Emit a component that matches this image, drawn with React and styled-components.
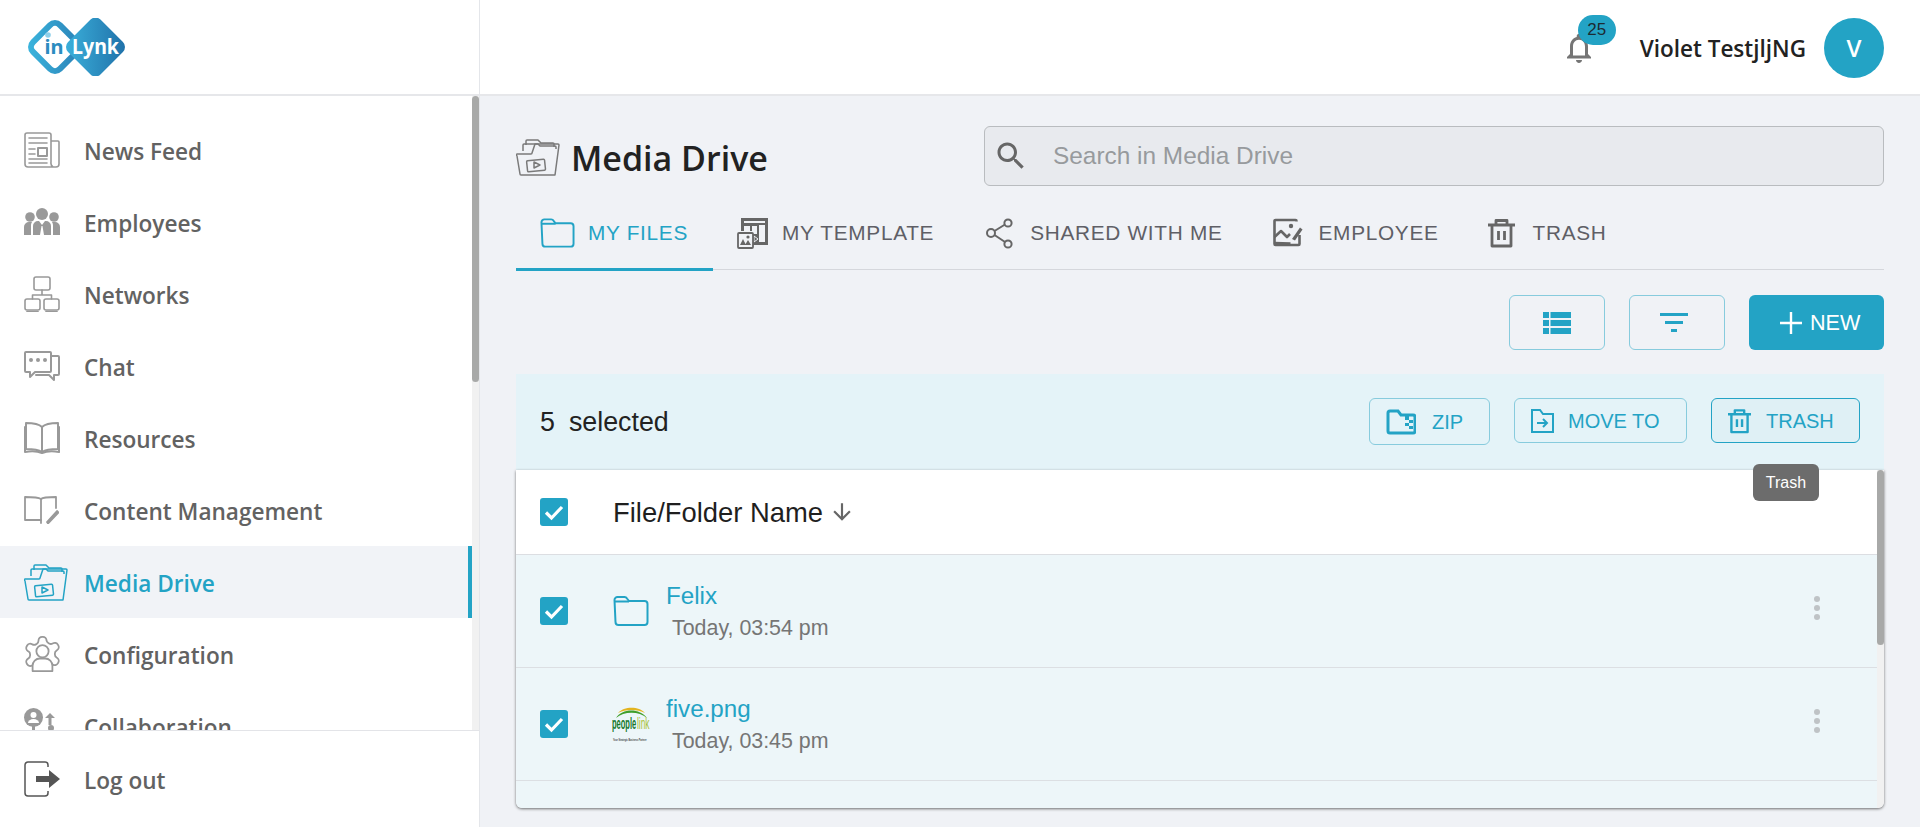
import React from 'react';
import styled, { createGlobalStyle } from 'styled-components';

const accent = '#23a3c5';
const arial = '"Liberation Sans", Arial, sans-serif';
const humanist = '"Open Sans", "Noto Sans", sans-serif';

const GlobalStyle = createGlobalStyle`
  html, body { margin: 0; padding: 0; height: 827px; overflow: hidden; background: #f0f2f6; }
  * { box-sizing: border-box; }
`;

const Page = styled.div`
  display: grid;
  grid-template-columns: 480px 1fr;
  width: 1920px;
  height: 827px;
`;

const Sidebar = styled.aside`
  display: flex;
  flex-direction: column;
  height: 827px;
  background: #fff;
  border-right: 1px solid #e4e6ea;
`;

const LogoBar = styled.div`
  height: 96px;
  flex: none;
  padding: 18px 0 0 24px;
  border-bottom: 2px solid #e6e7ea;
`;

const NavArea = styled.div`
  flex: 1;
  min-height: 0;
  display: flex;
`;

const NavList = styled.nav`
  flex: 1;
  min-width: 0;
  overflow: hidden;
  padding-top: 18px;
`;

const ScrollTrack = styled.div`
  width: 7px;
  flex: none;
  background: #f1f1f1;
`;

const ScrollThumb = styled.div`
  height: ${p => p.$h}px;
  background: #a8a9a8;
  border-radius: 4px;
`;

const NavItem = styled.div`
  display: flex;
  align-items: center;
  height: 72px;
  padding-left: 24px;
  font: 600 22.6px ${humanist};
  color: ${p => (p.$active ? accent : '#626262')};
  background: ${p => (p.$active ? '#f1f3f7' : 'transparent')};
  border-right: 4px solid ${p => (p.$active ? accent : 'transparent')};
`;

const NavGlyph = styled.span`
  display: flex;
  align-items: center;
  width: 61px;
  flex: none;
  color: ${p => (p.$active ? accent : '#999')};
`;

const NavLabel = styled.span`
  padding-top: 2px;
  margin-left: -1px;
`;

const SideFooter = styled.div`
  flex: none;
  height: 97px;
  border-top: 1px solid #e3e4e8;
  display: flex;
  align-items: center;
  padding-left: 24px;
  font: 600 22.6px ${humanist};
  color: #626262;
`;

const Main = styled.main`
  display: flex;
  flex-direction: column;
  min-width: 0;
`;

const Topbar = styled.header`
  height: 96px;
  flex: none;
  background: #fff;
  border-bottom: 2px solid #e6e7ea;
  display: flex;
  align-items: center;
  justify-content: flex-end;
  padding: 2px 36px 0 0;
`;

const BellWrap = styled.div`
  position: relative;
  width: 36px;
  height: 36px;
  margin-right: 43px;
  color: #757575;
`;

const Badge = styled.span`
  position: absolute;
  left: 17px;
  top: -15px;
  width: 38px;
  height: 30px;
  border-radius: 15px;
  background: ${accent};
  color: #1c2b33;
  font: 17px/30px ${arial};
  text-align: center;
`;

const UserName = styled.span`
  font: 600 22.5px ${humanist};
  color: #222;
  margin-right: 18px;
`;

const Avatar = styled.div`
  width: 60px;
  height: 60px;
  border-radius: 50%;
  background: ${accent};
  color: #fff;
  font: 600 24px/60px ${humanist};
  text-align: center;
`;

const Content = styled.div`
  padding: 30px 36px 0;
`;

const TitleRow = styled.div`
  display: flex;
  justify-content: space-between;
  align-items: center;
`;

const TitleWrap = styled.div`
  display: flex;
  align-items: center;
  gap: 11px;
  color: #7a7a7a;
  margin-top: 2px;
`;

const Title = styled.h1`
  margin: 2px 0 0;
  font: 600 34px ${humanist};
  color: #222;
`;

const SearchBox = styled.div`
  width: 900px;
  height: 60px;
  display: flex;
  align-items: center;
  padding-left: 8px;
  gap: 24px;
  background: #e8eaee;
  border: 1px solid #b9bcbf;
  border-radius: 6px;
  color: #666;
`;

const SearchText = styled.span`
  font: 24.4px ${arial};
  color: #979a9d;
`;

const TabRow = styled.div`
  display: flex;
  height: 84px;
  padding-top: 12px;
  border-bottom: 1px solid #d5d7dc;
`;

const Tab = styled.div`
  display: flex;
  align-items: center;
  gap: ${p => p.$gap}px;
  height: 73px;
  padding: 0 25px 0 24px;
  font: 20.8px ${arial};
  letter-spacing: 0.7px;
  color: ${p => (p.$active ? accent : '#5f5f66')};
  border-bottom: 3px solid ${p => (p.$active ? accent : 'transparent')};
  svg { flex: none; color: ${p => (p.$active ? accent : '#666')}; }
`;

const ActionRow = styled.div`
  display: flex;
  justify-content: flex-end;
  gap: 24px;
  padding: 25px 0 24px;
`;

const IconButton = styled.button`
  width: 96px;
  height: 55px;
  display: flex;
  align-items: center;
  justify-content: center;
  padding: 0 ${p => p.$pr || 0}px 0 0;
  background: transparent;
  border: 1px solid #87cbdd;
  border-radius: 6px;
  color: ${accent};
`;

const NewButton = styled.button`
  width: 135px;
  height: 55px;
  display: flex;
  align-items: center;
  gap: 7px;
  padding: 0 0 0 30px;
  background: ${accent};
  border: 0;
  border-radius: 6px;
  color: #fff;
  font: 21.6px ${arial};
`;

const SelectionBar = styled.div`
  height: 96px;
  display: flex;
  justify-content: space-between;
  align-items: flex-start;
  padding: 24px 24px 0;
  background: #e4f3f8;
`;

const SelectedCount = styled.div`
  display: flex;
  gap: 14px;
  font: 26.8px/48px ${arial};
  color: #222;
`;

const BarActions = styled.div`
  display: flex;
  align-items: flex-start;
  gap: 24px;
`;

const BarButton = styled.button`
  position: relative;
  display: flex;
  align-items: center;
  width: ${p => p.$w}px;
  height: ${p => p.$h || 45}px;
  padding: 1px 0 0 ${p => p.$pad}px;
  gap: ${p => p.$gap}px;
  background: ${p => (p.$hover ? '#dff0f5' : 'transparent')};
  border: 1px solid ${p => (p.$hover ? accent : '#87cbdd')};
  border-radius: 6px;
  color: ${accent};
  font: 20px ${arial};
`;

const Tooltip = styled.div`
  position: absolute;
  left: 41px;
  top: 65px;
  width: 66px;
  height: 37px;
  border-radius: 6px;
  background: #6c6c6c;
  color: #fff;
  font: 16px/37px ${arial};
  text-align: center;
  z-index: 3;
`;

const Card = styled.section`
  display: flex;
  height: 338px;
  border-radius: 0 0 6px 6px;
  overflow: hidden;
  box-shadow: 0 1px 3px rgba(0, 0, 0, 0.55);
`;

const TableBody = styled.div`
  flex: 1;
  min-width: 0;
  overflow: hidden;
  background: #edf6f9;
`;

const HeadRow = styled.div`
  height: 85px;
  display: flex;
  align-items: center;
  padding-left: 24px;
  background: #fff;
  border-bottom: 1px solid #dcdee2;
`;

const HeadLabel = styled.span`
  margin: 2px 0 0 45px;
  font: 27.4px ${arial};
  color: #1f1f1f;
`;

const FileRow = styled.div`
  height: 113px;
  display: flex;
  align-items: center;
  padding-left: 24px;
  border-bottom: 1px solid #dcdfe3;
`;

const Thumb = styled.div`
  width: 38px;
  margin-left: 44px;
  margin-right: 16px;
  flex: none;
  display: flex;
  justify-content: center;
`;

const FolderThumb = styled.span`
  display: flex;
  color: ${accent};
`;

const FileInfo = styled.div`
  display: flex;
  flex-direction: column;
  gap: 4px;
  margin-top: -1px;
`;

const FileName = styled.span`
  font: 24.2px/30px ${arial};
  color: ${accent};
`;

const FileDate = styled.span`
  font: 21.4px/26px ${arial};
  color: #757575;
  margin-left: 6px;
`;

const RowMenu = styled.div`
  margin-left: auto;
  margin-right: 56px;
  margin-bottom: 7px;
  color: #bfc3c6;
  display: flex;
`;

const CheckMark = () => (
  <svg width="28" height="28" viewBox="0 0 28 28">
    <rect width="28" height="28" rx="3" fill={accent} />
    <path d="M6 14.5l5.5 5.5L22 9" fill="none" stroke="#fff" strokeWidth="3.2" />
  </svg>
);

const Logo = () => (
  <svg width="102" height="58" viewBox="0 0 102 58">
    <defs>
      <linearGradient id="logoRight" x1="0" x2="1" y1="1" y2="0">
        <stop offset="0" stopColor="#3cb2dc" />
        <stop offset="1" stopColor="#1f6fa8" />
      </linearGradient>
      <linearGradient id="logoLeft" x1="0" x2="1" y1="1" y2="0">
        <stop offset="0" stopColor="#3ab4dd" />
        <stop offset="1" stopColor="#2a80b6" />
      </linearGradient>
    </defs>
    <rect x="12" y="10" width="38" height="38" rx="7" transform="rotate(45 31 29)" fill="#fff" stroke="url(#logoLeft)" strokeWidth="6" />
    <rect x="48.6" y="6.1" width="45.8" height="45.8" rx="7" transform="rotate(45 71.5 29)" fill="url(#logoRight)" />
    <circle cx="24" cy="17" r="2.8" fill="#8fd0ea" />
    <text x="20.5" y="35.5" fontFamily="Noto Sans, sans-serif" fontWeight="700" fontSize="20" fill="#2b8cc0">in</text>
    <text x="48" y="35.5" fontFamily="Noto Sans, sans-serif" fontWeight="700" fontSize="20.5" textLength="47" lengthAdjust="spacingAndGlyphs" fill="#fff">Lynk</text>
  </svg>
);

const Line = ({ children, w = 36, h = 36, sw = 1.6 }) => (
  <svg width={w} height={h} viewBox={`0 0 ${w} ${h}`} fill="none" stroke="currentColor" strokeWidth={sw} strokeLinejoin="round" strokeLinecap="round">
    {children}
  </svg>
);

const NewsIcon = () => (
  <Line>
    <path d="M27 30V3a2 2 0 0 0-2-2H3a2 2 0 0 0-2 2v29a3 3 0 0 0 3 3h28a3 3 0 0 0 3-3V10a1 1 0 0 0-1-1h-7M27 30a5 5 0 0 0 2 5" />
    <path d="M5 6h18M5 11h18M5 17h6M5 22h6M5 27h18M5 31h18" />
    <rect x="14" y="16" width="9" height="8" strokeWidth="2" />
  </Line>
);

const PeopleIcon = () => (
  <svg width="36" height="28" viewBox="0 0 36 28" fill="currentColor">
    <circle cx="18" cy="6" r="6" />
    <circle cx="6" cy="9" r="4.8" />
    <circle cx="30" cy="9" r="4.8" />
    <path d="M0 27v-8a5 5 0 0 1 5-5h3a6 6 0 0 0-1 3v10zM36 27v-8a5 5 0 0 0-5-5h-3a6 6 0 0 1 1 3v10z" />
    <path d="M9 27V18a5 5 0 0 1 5-5h1l3 4 3-4h1a5 5 0 0 1 5 5v9h-7l-1.5-9h-1L16 27z" />
  </svg>
);

const NetworkIcon = () => (
  <Line>
    <rect x="10" y="1" width="16" height="13" rx="2" />
    <rect x="1" y="23" width="15" height="11" rx="2" />
    <rect x="20" y="23" width="15" height="11" rx="2" />
    <path d="M18 14v5M8.5 23v-4h19v4M3 35.5h11M22 35.5h11" />
  </Line>
);

const ChatIcon = () => (
  <Line h={30} w={36} sw={2}>
    <path d="M26 1H2a1 1 0 0 0-1 1v18a1 1 0 0 0 1 1h4v5l5-5h15a1 1 0 0 0 1-1V2a1 1 0 0 0-1-1z" />
    <path d="M27 5h7a1 1 0 0 1 1 1v17a1 1 0 0 1-1 1h-4v5l-5-5H12" />
    <g fill="currentColor" stroke="none">
      <circle cx="7" cy="9" r="2" />
      <circle cx="14" cy="9" r="2" />
      <circle cx="21" cy="9" r="2" />
    </g>
  </Line>
);

const BookIcon = () => (
  <Line h={32} sw={2}>
    <path d="M18 5C15 2 9 1 2 1v26c7 0 13 1 16 3 3-2 9-3 16-3V1c-7 0-13 1-16 4z" />
    <path d="M18 5v25M1 5v25c6-1 12-1 17 1 5-2 11-2 17-1V5" />
  </Line>
);

const EditBookIcon = () => (
  <Line h={28} w={35} sw={1.8}>
    <path d="M17 3C14 1 8 1 1 1v23h16v3M17 3c2-2 9-2 15-2v11" />
    <path d="M17 3v21" />
    <path d="M23 26l10-11 1.5 1.5L24 27.5z" fill="currentColor" />
  </Line>
);

const MediaIcon = ({ w = 44, h = 37 }) => (
  <svg width={w} height={h} viewBox="0 0 44 37" fill="none" stroke="currentColor" strokeWidth="1.5" strokeLinejoin="round">
    <path d="M10 6V2a1 1 0 0 1 1-1h11l3 3h12a1 1 0 0 1 1 1v3" />
    <path d="M7 12V6a1 1 0 0 1 1-1h14l2 2h15a1 1 0 0 1 1 1v2" />
    <path d="M1 17l3 18a1 1 0 0 0 1 1h34l4-30a1 1 0 0 0-1-1H19l-3 9a1 1 0 0 1-1 1H2a1 1 0 0 0-1 2z" />
    <rect x="11" y="21" width="18" height="11" rx="1" transform="rotate(-6 20 26)" />
    <path d="M18 23l6 3-6 3z" />
  </svg>
);

const GearPersonIcon = () => (
  <svg width="37" height="36" viewBox="2 2 20 20" fill="none" stroke="currentColor" strokeWidth="1" strokeLinejoin="round">
    <path d="M12.22 2.5h-.44a2 2 0 0 0-2 2v.18a2 2 0 0 1-1 1.73l-.43.25a2 2 0 0 1-2 0l-.15-.08a2 2 0 0 0-2.73.73l-.22.38a2 2 0 0 0 .73 2.73l.15.1a2 2 0 0 1 1 1.72v.51a2 2 0 0 1-1 1.74l-.15.09a2 2 0 0 0-.73 2.73l.22.38a2 2 0 0 0 2.73.73l.15-.08a2 2 0 0 1 2 0l.43.25a2 2 0 0 1 1 1.73V20a2 2 0 0 0 2 2h.44a2 2 0 0 0 2-2v-.18a2 2 0 0 1 1-1.73l.43-.25a2 2 0 0 1 2 0l.15.08a2 2 0 0 0 2.73-.73l.22-.39a2 2 0 0 0-.73-2.73l-.15-.08a2 2 0 0 1-1-1.74v-.5a2 2 0 0 1 1-1.74l.15-.09a2 2 0 0 0 .73-2.73l-.22-.38a2 2 0 0 0-2.73-.73l-.15.08a2 2 0 0 1-2 0l-.43-.25a2 2 0 0 1-1-1.73V4.5a2 2 0 0 0-2-2z" />
    <path d="M6.5 21.5v-3a4 4 0 0 1 4-4h3a4 4 0 0 1 4 4v3z" fill="#fff" />
    <circle cx="12" cy="10.5" r="3.4" fill="#fff" />
  </svg>
);

const CollabIcon = () => (
  <svg width="36" height="36" viewBox="0 0 36 36" fill="currentColor">
    <circle cx="9.5" cy="9.5" r="9.5" />
    <circle cx="9.5" cy="7" r="3" fill="#fff" />
    <path d="M4 15a5.5 4 0 0 1 11 0z" fill="#fff" />
    <path d="M8 18h3v10H8z" />
    <path d="M26 5l-5 5h3.5v7h3v-7H31z" />
    <circle cx="27" cy="20" r="3" />
    <path d="M19 32a8 8 0 0 1 16 0z" />
  </svg>
);

const LogoutIcon = () => (
  <svg width="36" height="36" viewBox="0 0 36 36" fill="none">
    <path d="M24 6V4a3 3 0 0 0-3-3H4a3 3 0 0 0-3 3v28a3 3 0 0 0 3 3h17a3 3 0 0 0 3-3v-2" stroke="#555" strokeWidth="1.5" />
    <path d="M12 15h13V9l11 9-11 9v-6H12z" fill="#555" />
  </svg>
);

const FolderIcon = ({ w = 35, h = 30 }) => (
  <svg width={w} height={h} viewBox="0 0 36 30" fill="none" stroke="currentColor" strokeWidth="2" strokeLinejoin="round">
    <path d="M1.5 4a3 3 0 0 1 3-3h7a3 3 0 0 1 2.5 1.5L16 5h15.5a3 3 0 0 1 3 3v18a3 3 0 0 1-3 3h-26a3 3 0 0 1-3-3z" />
    <path d="M1.5 5.5H16" />
  </svg>
);

const TemplateIcon = () => (
  <svg width="32" height="32" viewBox="0 0 32 32">
    <path d="M4 1h27v27H15V14H4z" fill="currentColor" />
    <path d="M7 4h21v2H7zM7 9h6v6H7zM15 9h5v8h-5zM22 8h6v17h-6z" fill="#f0f2f6" />
    <path d="M17 19l4 3-4 3z" fill="currentColor" stroke="#f0f2f6" />
    <rect x="1" y="16" width="15" height="15" rx="1" fill="#f0f2f6" stroke="currentColor" strokeWidth="1.8" />
    <path d="M3 28l3-6 3 6zM8 28l3-5 3 5z" fill="currentColor" />
    <circle cx="11" cy="20" r="1.6" fill="currentColor" />
  </svg>
);

const ShareIcon = () => (
  <svg width="32" height="32" viewBox="0 0 32 32" fill="none" stroke="currentColor" strokeWidth="2">
    <circle cx="8" cy="16" r="4" />
    <circle cx="25" cy="6" r="3.6" />
    <circle cx="25" cy="27" r="3.6" />
    <path d="M11.5 14l10.5-6.5M11.5 18l10.5 7" />
  </svg>
);

const EmployeeIcon = () => (
  <svg width="32" height="30" viewBox="0 0 32 30" fill="none" stroke="currentColor" strokeWidth="2.6" strokeLinejoin="round">
    <path d="M24.5 3.5V3a1 1 0 0 0-1-1H3.5a1 1 0 0 0-1 1v23a1 1 0 0 0 1 1h23a1 1 0 0 0 1-1v-9" />
    <path d="M2.5 19l6.5-6 6 6 3-3M2.5 25l16 .5" />
    <circle cx="19" cy="8" r="2.2" fill="currentColor" stroke="none" />
    <path d="M20 21L28 9.5l2.5 2L23 22.5z" fill="currentColor" stroke="none" />
  </svg>
);

const TrashIcon = ({ w = 27, h = 30, sw = 2.8 }) => (
  <svg width={w} height={h} viewBox="0 0 27 30" fill="none" stroke="currentColor" strokeWidth={sw} strokeLinejoin="round">
    <path d="M0 7h27M8 7V2.5h11V7M4 7v21h19V7" />
    <path d="M10.5 13v9M16.5 13v9" />
  </svg>
);

const BellIcon = () => (
  <svg width="36" height="36" viewBox="0 0 24 24" fill="currentColor">
    <path d="M12 22c1.1 0 2-.9 2-2h-4c0 1.1.9 2 2 2zm6-6v-5c0-3.07-1.63-5.64-4.5-6.32V4c0-.83-.67-1.5-1.5-1.5s-1.5.67-1.5 1.5v.68C7.64 5.36 6 7.92 6 11v5l-2 2v1h16v-1l-2-2zm-2 1H8v-6c0-2.48 1.51-4.5 4-4.5s4 2.02 4 4.5v6z" />
  </svg>
);

const SearchIcon = () => (
  <svg width="36" height="36" viewBox="0 0 24 24" fill="currentColor">
    <path d="M15.5 14h-.79l-.28-.27C15.41 12.59 16 11.11 16 9.5 16 5.91 13.09 3 9.5 3S3 5.91 3 9.5 5.91 16 9.5 16c1.61 0 3.09-.59 4.23-1.57l.27.28v.79l5 4.99L20.49 19l-4.99-5zm-6 0C7.01 14 5 11.99 5 9.5S7.01 5 9.5 5 14 7.01 14 9.5 11.99 14 9.5 14z" />
  </svg>
);

const ListIcon = () => (
  <svg width="28" height="22" viewBox="0 0 28 22" fill="currentColor">
    <path d="M0 0h6v6H0zM7.5 0H28v6H7.5zM0 8h6v6H0zM7.5 8H28v6H7.5zM0 16h6v6H0zM7.5 16H28v6H7.5z" />
  </svg>
);

const FilterIcon = () => (
  <svg width="28" height="19" viewBox="0 0 28 19" fill="currentColor">
    <path d="M0 0h28v3H0zM5 8h18v3H5zM11 16h6v3h-6z" />
  </svg>
);

const PlusIcon = () => (
  <svg width="24" height="24" viewBox="0 0 24 24" stroke="#fff" strokeWidth="2.4">
    <path d="M12 1v22M1 12h22" />
  </svg>
);

const ZipIcon = () => (
  <svg width="30" height="26" viewBox="0 0 30 26">
    <path d="M2 4a2 2 0 0 1 2-2h8l3 4h12a2 2 0 0 1 2 2v14a2 2 0 0 1-2 2H4a2 2 0 0 1-2-2z" fill="none" stroke="currentColor" strokeWidth="3" />
    <path d="M19 7h4v4h-4zM23 11h4v3h-4zM19 14h4v3h-4zM23 17h4v3h-4z" fill="currentColor" />
  </svg>
);

const MoveIcon = () => (
  <svg width="23" height="24" viewBox="0 0 23 24" fill="none" stroke="currentColor" strokeWidth="2">
    <path d="M1 1h8l3 4h10v18H1z" />
    <path d="M6 14h10M12 10l4 4-4 4" />
  </svg>
);

const SortArrow = () => (
  <svg width="26" height="26" viewBox="0 0 24 24" fill="#666" style={{ marginLeft: 6 }}>
    <path d="M20 12l-1.41-1.41L13 16.17V4h-2v12.17l-5.58-5.59L4 12l8 8 8-8z" />
  </svg>
);

const Kebab = () => (
  <svg width="8" height="26" viewBox="0 0 8 26" fill="currentColor">
    <circle cx="4" cy="4" r="3" />
    <circle cx="4" cy="13" r="3" />
    <circle cx="4" cy="22" r="3" />
  </svg>
);

// the logo lettering is condensed, so the text is squeezed horizontally
const PeoplelinkThumb = () => (
  <svg width="38" height="38" viewBox="0 0 38 38" fontFamily="Liberation Sans, sans-serif">
    <path d="M4 13C10 3 28 3 35 13C27 6 12 6 4 13z" fill="#3f9e2c" />
    <path d="M6 8C12 1 27 1 33 8C26 4 13 4 6 8z" fill="#e3b420" />
    <text transform="translate(0 24) scale(0.47 1)" fontSize="16" fontWeight="700" fill="#13762a">people</text>
    <text transform="translate(25 24) scale(0.52 1)" fontSize="16" fill="#a9c23a">link</text>
    <text transform="translate(1 36) scale(0.5 1)" fontSize="4.4" fontWeight="700" fill="#444">Your Strategic Business Partner</text>
  </svg>
);

const navItems = [
  { label: 'News Feed', icon: <NewsIcon /> },
  { label: 'Employees', icon: <PeopleIcon /> },
  { label: 'Networks', icon: <NetworkIcon /> },
  { label: 'Chat', icon: <ChatIcon /> },
  { label: 'Resources', icon: <BookIcon /> },
  { label: 'Content Management', icon: <EditBookIcon /> },
  { label: 'Media Drive', icon: <MediaIcon />, active: true },
  { label: 'Configuration', icon: <GearPersonIcon /> },
  { label: 'Collaboration', icon: <CollabIcon /> },
];

const tabs = [
  { label: 'MY FILES', icon: <FolderIcon />, gap: 13, active: true },
  { label: 'MY TEMPLATE', icon: <TemplateIcon />, gap: 13 },
  { label: 'SHARED WITH ME', icon: <ShareIcon />, gap: 15 },
  { label: 'EMPLOYEE', icon: <EmployeeIcon />, gap: 15 },
  { label: 'TRASH', icon: <TrashIcon />, gap: 18 },
];

const files = [
  { name: 'Felix', date: 'Today, 03:54 pm', thumb: <FolderThumb><FolderIcon w={36} h={30} /></FolderThumb> },
  { name: 'five.png', date: 'Today, 03:45 pm', thumb: <PeoplelinkThumb /> },
  {},
];

export default function App() {
  return (
    <Page>
      <GlobalStyle />
      <Sidebar>
        <LogoBar><Logo /></LogoBar>
        <NavArea>
          <NavList>
            {navItems.map(item => (
              <NavItem key={item.label} $active={item.active}>
                <NavGlyph $active={item.active}>{item.icon}</NavGlyph>
                <NavLabel>{item.label}</NavLabel>
              </NavItem>
            ))}
          </NavList>
          <ScrollTrack><ScrollThumb $h={286} /></ScrollTrack>
        </NavArea>
        <SideFooter>
          <NavGlyph><LogoutIcon /></NavGlyph>
          <NavLabel>Log out</NavLabel>
        </SideFooter>
      </Sidebar>
      <Main>
        <Topbar>
          <BellWrap>
            <BellIcon />
            <Badge>25</Badge>
          </BellWrap>
          <UserName>Violet TestjljNG</UserName>
          <Avatar>V</Avatar>
        </Topbar>
        <Content>
          <TitleRow>
            <TitleWrap>
              <MediaIcon />
              <Title>Media Drive</Title>
            </TitleWrap>
            <SearchBox>
              <SearchIcon />
              <SearchText>Search in Media Drive</SearchText>
            </SearchBox>
          </TitleRow>
          <TabRow>
            {tabs.map(t => (
              <Tab key={t.label} $active={t.active} $gap={t.gap}>
                {t.icon}
                {t.label}
              </Tab>
            ))}
          </TabRow>
          <ActionRow>
            <IconButton><ListIcon /></IconButton>
            <IconButton $pr={6}><FilterIcon /></IconButton>
            <NewButton><PlusIcon />NEW</NewButton>
          </ActionRow>
          <SelectionBar>
            <SelectedCount>
              <span>5</span>
              <span>selected</span>
            </SelectedCount>
            <BarActions>
              <BarButton $w={121} $h={47} $pad={16} $gap={16}><ZipIcon />ZIP</BarButton>
              <BarButton $w={173} $pad={16} $gap={14}><MoveIcon />MOVE TO</BarButton>
              <BarButton $w={149} $pad={16} $gap={15} $hover>
                <TrashIcon w={23} h={26} sw={2.8} />
                TRASH
                <Tooltip>Trash</Tooltip>
              </BarButton>
            </BarActions>
          </SelectionBar>
          <Card>
            <TableBody>
              <HeadRow>
                <CheckMark />
                <HeadLabel>File/Folder Name</HeadLabel>
                <SortArrow />
              </HeadRow>
              {files.map((f, i) => (
                <FileRow key={i}>
                  <CheckMark />
                  <Thumb>{f.thumb}</Thumb>
                  <FileInfo>
                    <FileName>{f.name}</FileName>
                    <FileDate>{f.date}</FileDate>
                  </FileInfo>
                  <RowMenu><Kebab /></RowMenu>
                </FileRow>
              ))}
            </TableBody>
            <ScrollTrack><ScrollThumb $h={175} /></ScrollTrack>
          </Card>
        </Content>
      </Main>
    </Page>
  );
}
